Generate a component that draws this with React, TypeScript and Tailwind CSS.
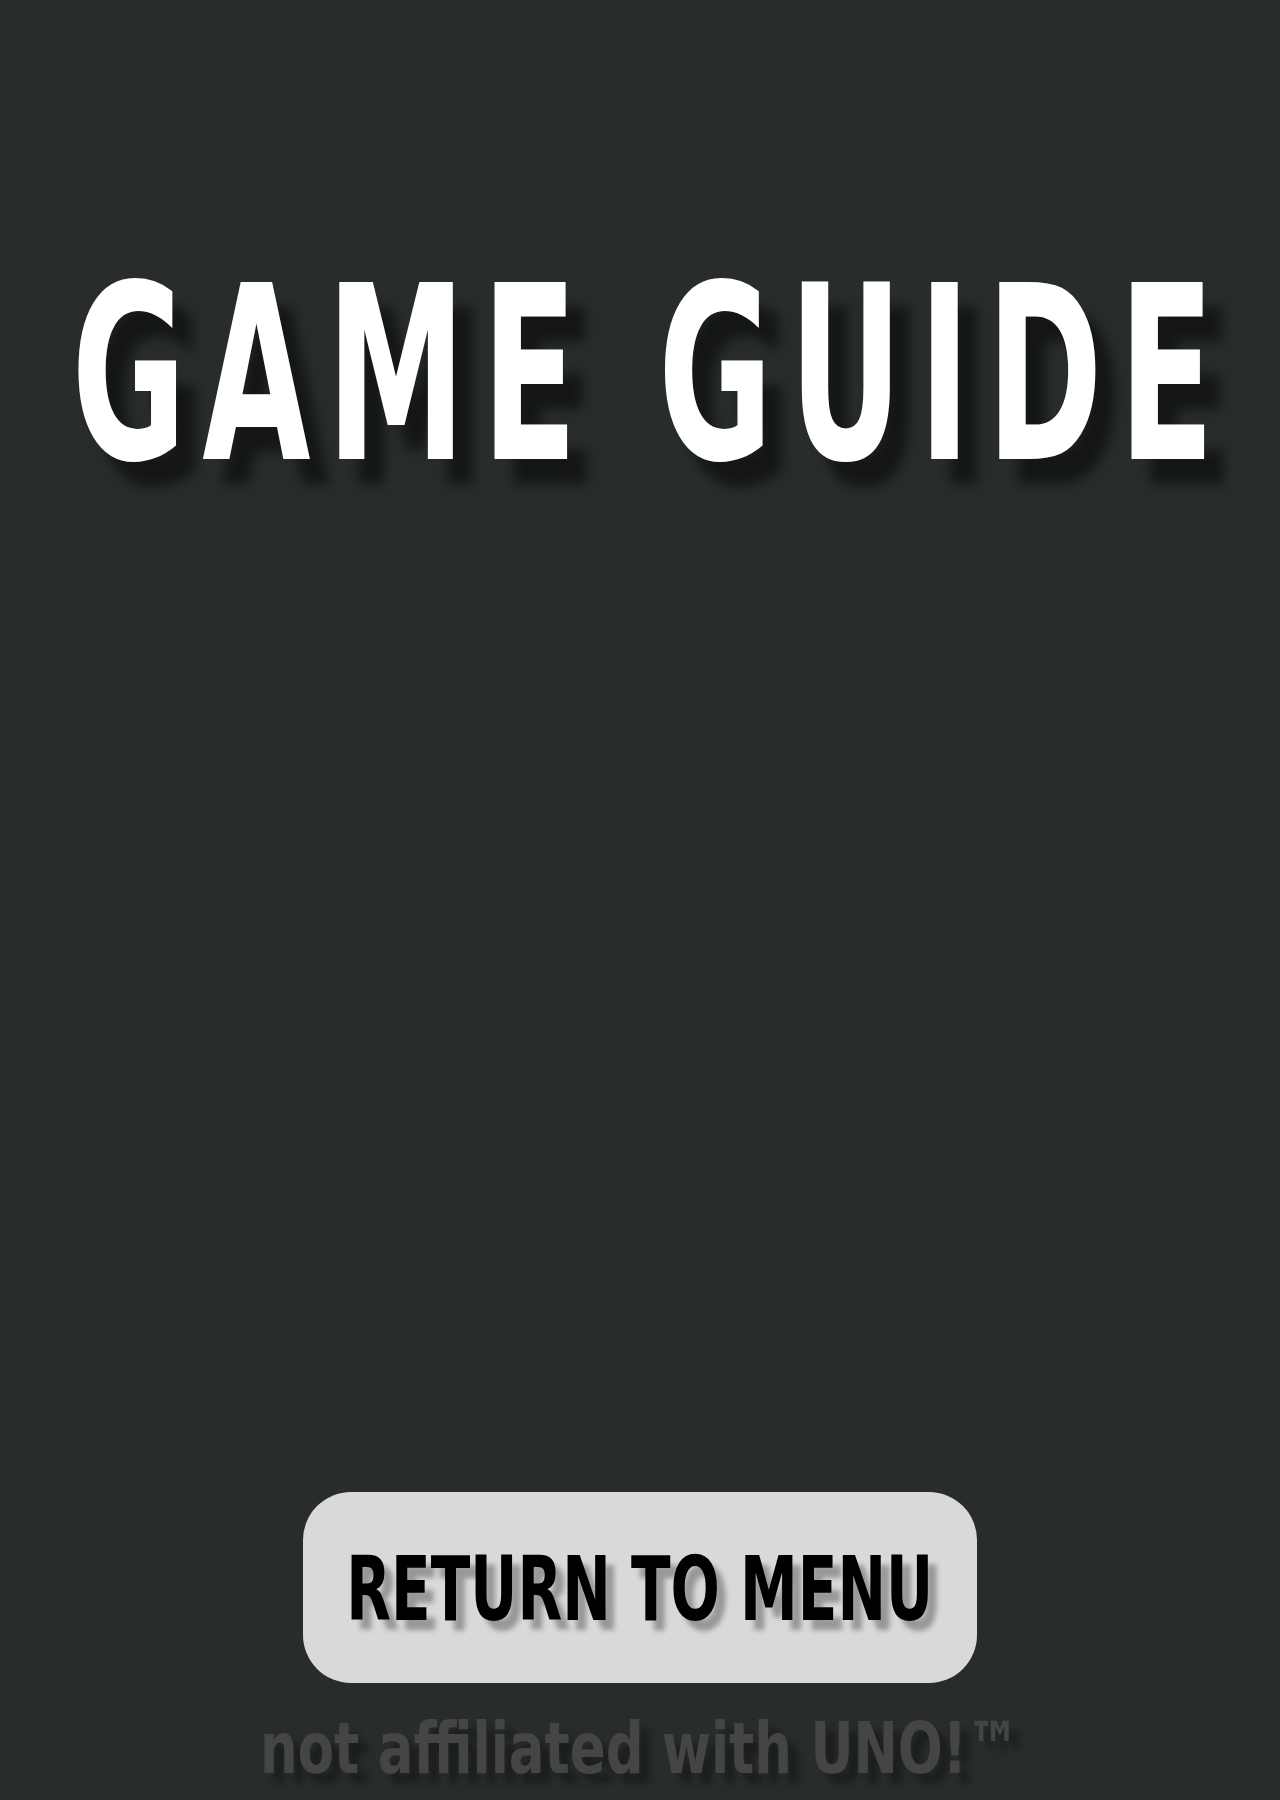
import React from "react";

const font = { fontFamily: '"DejaVu Sans Condensed", "DejaVu Sans", "Liberation Sans", sans-serif' };

export default function App() {
  return (
    <div className="w-full min-h-[1800px] overflow-hidden bg-[#282c2d] flex flex-col items-center" style={font}>
      <h1 className="mt-[253px] w-[1280px] flex justify-center overflow-visible text-[243px] leading-none font-bold text-white uppercase whitespace-nowrap">
        <span className="inline-block shrink-0 pl-[25px] ml-[6px] scale-x-[0.64] tracking-[25px] [text-shadow:30px_25px_14px_rgba(0,0,0,0.5)]">
          GAME GUIDE
        </span>
      </h1>
      <div className="flex-1" />
      <button className="w-[674px] h-[191px] rounded-[48px] bg-[#d9d9d9] flex items-center justify-center whitespace-nowrap">
        <span className="inline-block shrink-0 mt-[3px] scale-x-[0.725] text-[89px] leading-none font-bold text-black [text-shadow:12px_10px_6px_rgba(0,0,0,0.3)]">
          RETURN TO MENU
        </span>
      </button>
      <p className="mt-[29px] mb-[16px] text-[72px] leading-none font-bold text-[#454545] whitespace-nowrap">
        <span className="inline-block scale-x-[0.817] [text-shadow:12px_10px_8px_rgba(0,0,0,0.35)]">
          not affiliated with UNO!™
        </span>
      </p>
    </div>
  );
}
